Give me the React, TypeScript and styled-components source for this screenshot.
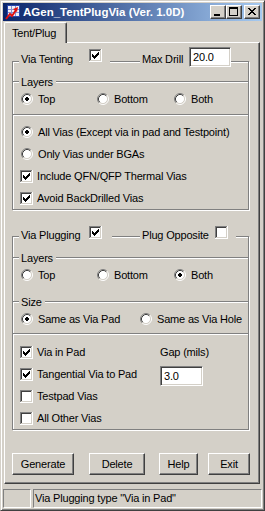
import React from 'react'
import styled, { createGlobalStyle } from 'styled-components'

const FACE = '#d4d0c8'
const SHADOW = '#808080'
const DARK = '#404040'
const WHITE = '#ffffff'

const GlobalStyle = createGlobalStyle`
  * { box-sizing: border-box; }
  html, body { margin: 0; padding: 0; background: ${FACE}; }
  body {
    font-family: "Liberation Sans", Arial, sans-serif;
    font-size: 11px;
    letter-spacing: -0.18px;
    color: #000;
  }
`

const Window = styled.div`
  width: 265px;
  height: 511px;
  padding: 2px;
  background: ${FACE};
  border: 1px solid;
  border-color: ${FACE} ${DARK} ${DARK} ${FACE};
  box-shadow: inset 1px 1px ${WHITE}, inset -1px -1px ${SHADOW};
  display: flex;
  flex-direction: column;
`

const TitleBar = styled.div`
  height: 18px;
  flex: none;
  display: flex;
  align-items: center;
  padding: 0 2px;
  background: linear-gradient(to right, #0a246a, #a6caf0);
`

const TitleText = styled.span`
  margin-left: 2px;
  color: ${WHITE};
  font-weight: bold;
  font-size: 11.5px;
  letter-spacing: 0;
  line-height: 14px;
  white-space: nowrap;
`

const CaptionButtons = styled.div`
  margin-left: auto;
  display: flex;
`

const CaptionButton = styled.span<{ $gap?: number }>`
  display: block;
  width: 16px;
  height: 14px;
  margin-left: ${p => p.$gap ?? 0}px;
  background: ${FACE};
  border: 1px solid;
  border-color: ${WHITE} ${DARK} ${DARK} ${WHITE};
  box-shadow: inset -1px -1px ${SHADOW};
`

const Pix = styled.svg`
  display: block;
  flex: none;
`

const TabStrip = styled.div`
  height: 21px;
  flex: none;
  display: flex;
  align-items: flex-end;
  padding-left: 1px;
`

const Tab = styled.div`
  position: relative;
  z-index: 1;
  width: 63px;
  height: 21px;
  margin-bottom: -1px;
  padding-left: 7px;
  display: flex;
  align-items: center;
  background: ${FACE};
  border-top: 1px solid ${WHITE};
  border-left: 1px solid ${WHITE};
  border-right: 1px solid ${DARK};
  border-top-left-radius: 2px;
  border-top-right-radius: 2px;
  box-shadow: inset -1px 0 ${SHADOW};
  line-height: 13px;
`

const Panel = styled.div`
  height: 442px;
  flex: none;
  margin: 0 2px 0 1px;
  border: 1px solid;
  border-color: ${WHITE} ${DARK} ${DARK} ${WHITE};
  box-shadow: inset -1px -1px ${SHADOW};
  display: flex;
  flex-direction: column;
`

const Frame = styled.div<{ $mt: number }>`
  position: relative;
  width: 237px;
  margin: ${p => p.$mt}px 0 0 7px;
  border: 1px solid ${SHADOW};
  box-shadow: inset 1px 1px ${WHITE}, 1px 1px ${WHITE};
`

const Legend = styled.div<{ $top: number }>`
  position: absolute;
  top: ${p => p.$top}px;
  left: 6px;
  display: flex;
  align-items: flex-start;
`

const LegendLabel = styled.span<{ $w: number; $mt: number }>`
  width: ${p => p.$w}px;
  margin-top: ${p => p.$mt}px;
  padding-left: 2px;
  line-height: 13px;
  background: ${FACE};
  white-space: nowrap;
`

const LegendCell = styled.span<{ $w: number; $mt: number }>`
  width: ${p => p.$w}px;
  height: 16px;
  margin-top: ${p => p.$mt}px;
  background: ${FACE};
`

const LegendGap = styled.span<{ $w: number }>`
  width: ${p => p.$w}px;
`

const SectionHead = styled.div<{ $mt: number }>`
  height: 14px;
  margin-top: ${p => p.$mt}px;
  display: flex;
  align-items: center;
`

const Etch = styled.div<{ $w?: number; $mt?: number }>`
  height: 2px;
  margin-top: ${p => p.$mt ?? 0}px;
  border-top: 1px solid ${SHADOW};
  border-bottom: 1px solid ${WHITE};
  ${p => (p.$w ? `width: ${p.$w}px; flex: none;` : 'flex: 1;')}
`

const HeadLabel = styled.span`
  padding: 0 3px 0 2px;
  line-height: 13px;
`

const RadioGrid = styled.div<{ $cols: string }>`
  height: 20px;
  padding-left: 7px;
  display: grid;
  grid-template-columns: ${p => p.$cols};
  align-items: center;
`

const Choice = styled.label`
  display: flex;
  align-items: center;
  line-height: 13px;
  white-space: nowrap;
`

const RadioMark = styled(Pix)`
  margin: 0 5px 0 1px;
`

const CheckMark = styled(Pix)`
  margin-right: 4px;
`

const Options = styled.div<{ $mt: number }>`
  margin-top: ${p => p.$mt}px;
`

const OptionRow = styled(Choice)<{ $pl?: number }>`
  height: 22px;
  padding-left: ${p => p.$pl ?? 7}px;
`

const CheckGrid = styled.div`
  margin-top: 6px;
  display: grid;
  grid-template-columns: 147px 1fr;
`

const GapLabel = styled.div`
  height: 22px;
  display: flex;
  align-items: center;
  line-height: 13px;
`

const Field = styled.div<{ $w: number; $mt?: number }>`
  width: ${p => p.$w}px;
  height: 20px;
  margin-top: ${p => p.$mt ?? 0}px;
  padding-left: 3px;
  background: ${WHITE};
  border: 1px solid;
  border-color: ${SHADOW} ${WHITE} ${WHITE} ${SHADOW};
  box-shadow: inset 1px 1px ${DARK}, inset -1px -1px ${FACE};
  line-height: 18px;
`

const ButtonRow = styled.div`
  margin: 23px 0 0 7px;
  display: flex;
`

const PushButton = styled.button<{ $w: number; $ml: number }>`
  width: ${p => p.$w}px;
  height: 22px;
  margin-left: ${p => p.$ml}px;
  padding: 0;
  font: inherit;
  letter-spacing: inherit;
  color: #000;
  background: ${FACE};
  border: 1px solid;
  border-color: ${WHITE} ${DARK} ${DARK} ${WHITE};
  box-shadow: inset -1px -1px ${SHADOW};
`

const StatusBar = styled.div`
  height: 19px;
  flex: none;
  margin-top: 5px;
  display: flex;
  gap: 2px;
`

const StatusCell = styled.div<{ $w?: number }>`
  ${p => (p.$w ? `width: ${p.$w}px;` : 'flex: 1;')}
  padding-left: 1px;
  border: 1px solid;
  border-color: ${SHADOW} ${WHITE} ${WHITE} ${SHADOW};
  line-height: 17px;
  white-space: nowrap;
`

function AppIcon() {
  return (
    <Pix width="16" height="16" viewBox="0 0 16 16" shapeRendering="crispEdges">
      <rect x="2" y="1" width="13" height="12" fill="#2848b0" />
      <rect x="3" y="2" width="11" height="10" fill="#f0f0f8" />
      <rect x="3" y="5" width="11" height="1" fill="#8890d0" />
      <rect x="3" y="8" width="11" height="1" fill="#8890d0" />
      <rect x="6" y="2" width="1" height="10" fill="#8890d0" />
      <rect x="10" y="2" width="1" height="10" fill="#8890d0" />
      <polyline
        points="1,15 5,10 7,12 11,6"
        fill="none"
        stroke="#e01010"
        strokeWidth="2"
        shapeRendering="auto"
      />
      <polygon points="8,5 13,3 12,8" fill="#e01010" shapeRendering="auto" />
    </Pix>
  )
}

function Check({ on }: { on?: boolean }) {
  return (
    <CheckMark width="13" height="13" viewBox="0 0 13 13" shapeRendering="crispEdges">
      <rect width="13" height="13" fill={WHITE} />
      <rect width="12" height="1" fill={SHADOW} />
      <rect width="1" height="12" fill={SHADOW} />
      <rect x="1" y="1" width="10" height="1" fill={DARK} />
      <rect x="1" y="1" width="1" height="10" fill={DARK} />
      <rect x="1" y="11" width="11" height="1" fill={FACE} />
      <rect x="11" y="1" width="1" height="11" fill={FACE} />
      {on && (
        <g fill="#000">
          <rect x="9" y="3" width="1" height="1" />
          <rect x="8" y="4" width="2" height="1" />
          <rect x="3" y="5" width="1" height="1" />
          <rect x="7" y="5" width="3" height="1" />
          <rect x="3" y="6" width="2" height="1" />
          <rect x="6" y="6" width="3" height="1" />
          <rect x="3" y="7" width="5" height="1" />
          <rect x="4" y="8" width="3" height="1" />
          <rect x="5" y="9" width="1" height="1" />
        </g>
      )}
    </CheckMark>
  )
}

function Radio({ on }: { on?: boolean }) {
  return (
    <RadioMark width="12" height="12" viewBox="0 0 12 12">
      <circle cx="6" cy="6" r="4.6" fill={WHITE} />
      <path d="M2.11 9.89A5.5 5.5 0 0 1 9.89 2.11" fill="none" stroke={SHADOW} />
      <path d="M9.89 2.11A5.5 5.5 0 0 1 2.11 9.89" fill="none" stroke={WHITE} />
      <path d="M2.82 9.18A4.5 4.5 0 0 1 9.18 2.82" fill="none" stroke={DARK} />
      <path d="M9.18 2.82A4.5 4.5 0 0 1 2.82 9.18" fill="none" stroke={FACE} />
      {on && (
        <g fill="#000" shapeRendering="crispEdges">
          <rect x="4" y="5" width="4" height="2" />
          <rect x="5" y="4" width="2" height="4" />
        </g>
      )}
    </RadioMark>
  )
}

export default function App() {
  return (
    <>
      <GlobalStyle />
      <Window>
        <TitleBar>
          <AppIcon />
          <TitleText>AGen_TentPlugVia (Ver. 1.0D)</TitleText>
          <CaptionButtons>
            <CaptionButton>
              <Pix width="14" height="12" shapeRendering="crispEdges">
                <rect x="3" y="8" width="6" height="2" fill="#000" />
              </Pix>
            </CaptionButton>
            <CaptionButton>
              <Pix width="14" height="12" shapeRendering="crispEdges">
                <rect x="2" y="1" width="9" height="2" fill="#000" />
                <rect x="2" y="1" width="1" height="9" fill="#000" />
                <rect x="10" y="1" width="1" height="9" fill="#000" />
                <rect x="2" y="9" width="9" height="1" fill="#000" />
              </Pix>
            </CaptionButton>
            <CaptionButton $gap={2}>
              <Pix width="14" height="12" shapeRendering="crispEdges">
                <g fill="#000">
                  <rect x="3" y="2" width="2" height="1" />
                  <rect x="9" y="2" width="2" height="1" />
                  <rect x="4" y="3" width="2" height="1" />
                  <rect x="8" y="3" width="2" height="1" />
                  <rect x="5" y="4" width="4" height="1" />
                  <rect x="6" y="5" width="2" height="1" />
                  <rect x="5" y="6" width="4" height="1" />
                  <rect x="4" y="7" width="2" height="1" />
                  <rect x="8" y="7" width="2" height="1" />
                  <rect x="3" y="8" width="2" height="1" />
                  <rect x="9" y="8" width="2" height="1" />
                </g>
              </Pix>
            </CaptionButton>
          </CaptionButtons>
        </TitleBar>

        <TabStrip>
          <Tab>Tent/Plug</Tab>
        </TabStrip>

        <Panel>
          <Frame $mt={18}>
            <Legend $top={-15}>
              <LegendLabel $w={70} $mt={6}>Via Tenting</LegendLabel>
              <LegendCell $w={21} $mt={2}>
                <Check on />
              </LegendCell>
              <LegendGap $w={30} />
              <LegendLabel $w={49} $mt={6}>Max Drill</LegendLabel>
              <Field $w={42}>20.0</Field>
            </Legend>

            <SectionHead $mt={13}>
              <Etch $w={6} />
              <HeadLabel>Layers</HeadLabel>
              <Etch />
            </SectionHead>
            <RadioGrid $cols="76px 77px 1fr">
              <Choice><Radio on />Top</Choice>
              <Choice><Radio />Bottom</Choice>
              <Choice><Radio />Both</Choice>
            </RadioGrid>
            <Etch $mt={5} />

            <Options $mt={5}>
              <OptionRow><Radio on />All Vias (Except via in pad and Testpoint)</OptionRow>
              <OptionRow><Radio />Only Vias under BGAs</OptionRow>
              <OptionRow><Check on />Include QFN/QFP Thermal Vias</OptionRow>
              <OptionRow><Check on />Avoid BackDrilled Vias</OptionRow>
            </Options>
          </Frame>

          <Frame $mt={26}>
            <Legend $top={-11}>
              <LegendLabel $w={70} $mt={3}>Via Plugging</LegendLabel>
              <LegendCell $w={23} $mt={0}>
                <Check on />
              </LegendCell>
              <LegendGap $w={28} />
              <LegendLabel $w={75} $mt={3}>Plug Opposite</LegendLabel>
              <LegendCell $w={21} $mt={0}>
                <Check />
              </LegendCell>
            </Legend>

            <SectionHead $mt={14}>
              <Etch $w={6} />
              <HeadLabel>Layers</HeadLabel>
              <Etch />
            </SectionHead>
            <RadioGrid $cols="76px 77px 1fr">
              <Choice><Radio />Top</Choice>
              <Choice><Radio />Bottom</Choice>
              <Choice><Radio on />Both</Choice>
            </RadioGrid>

            <SectionHead $mt={10}>
              <Etch $w={6} />
              <HeadLabel>Size</HeadLabel>
              <Etch />
            </SectionHead>
            <RadioGrid $cols="119px 1fr">
              <Choice><Radio on />Same as Via Pad</Choice>
              <Choice><Radio />Same as Via Hole</Choice>
            </RadioGrid>
            <Etch $mt={4} />

            <CheckGrid>
              <div>
                <OptionRow><Check on />Via in Pad</OptionRow>
                <OptionRow><Check on />Tangential Via to Pad</OptionRow>
                <OptionRow><Check />Testpad Vias</OptionRow>
                <OptionRow><Check />All Other Vias</OptionRow>
              </div>
              <div>
                <GapLabel>Gap (mils)</GapLabel>
                <Field $w={43} $mt={3}>3.0</Field>
              </div>
            </CheckGrid>
          </Frame>

          <ButtonRow>
            <PushButton $w={62} $ml={0}>Generate</PushButton>
            <PushButton $w={56} $ml={15}>Delete</PushButton>
            <PushButton $w={39} $ml={14}>Help</PushButton>
            <PushButton $w={42} $ml={10}>Exit</PushButton>
          </ButtonRow>
        </Panel>

        <StatusBar>
          <StatusCell $w={28} />
          <StatusCell>Via Plugging type "Via in Pad"</StatusCell>
        </StatusBar>
      </Window>
    </>
  )
}
